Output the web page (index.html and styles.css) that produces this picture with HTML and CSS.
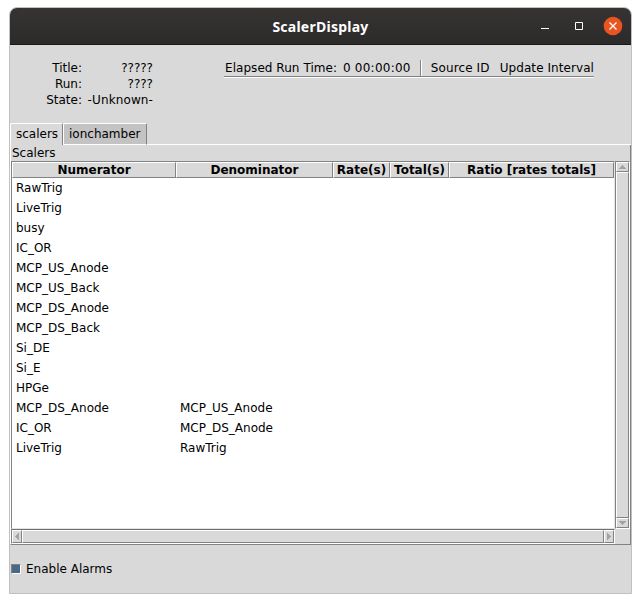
FILE: index.html
```html
<!DOCTYPE html>
<html lang="en">
<head>
<meta charset="utf-8">
<title>ScalerDisplay</title>
<link rel="stylesheet" href="styles.css">
</head>
<body>
<main class="window">
  <header class="titlebar">
    <span></span>
    <h1>ScalerDisplay</h1>
    <svg class="controls" width="96" height="36" viewBox="0 0 96 36">
      <path d="M6 20.5h8" stroke="#fff" fill="none"/>
      <path d="M40.5 14.5h7v7h-7z" stroke="#fff" fill="none"/>
      <circle cx="78" cy="18" r="9.3" fill="#e95420"/>
      <path d="M74.5 14.5l7 7M81.5 14.5l-7 7" stroke="#fff" stroke-width="1.3" fill="none"/>
    </svg>
  </header>
  <section class="status">
    <div class="run-info">
      <span>Title:</span><span>?????</span>
      <span>Run:</span><span>????</span>
      <span>State:</span><span class="state">-Unknown-</span>
    </div>
    <div class="timing">
      <span class="elapsed-label">Elapsed Run Time:</span>
      <span class="elapsed">0 00:00:00</span>
      <span class="source">Source ID</span>
      <span class="interval">Update Interval</span>
    </div>
  </section>
  <nav class="tabs">
    <div class="tab active">scalers</div>
    <div class="tab">ionchamber</div>
    <div class="tab-line"></div>
  </nav>
  <section class="pane">
    <div class="caption">Scalers</div>
    <div class="tree">
      <div class="list">
        <div class="row head"><span>Numerator</span><span>Denominator</span><span>Rate(s)</span><span>Total(s)</span><span>Ratio [rates totals]</span></div>
        <div class="row"><span>RawTrig</span></div>
        <div class="row"><span>LiveTrig</span></div>
        <div class="row"><span>busy</span></div>
        <div class="row"><span>IC_OR</span></div>
        <div class="row"><span>MCP_US_Anode</span></div>
        <div class="row"><span>MCP_US_Back</span></div>
        <div class="row"><span>MCP_DS_Anode</span></div>
        <div class="row"><span>MCP_DS_Back</span></div>
        <div class="row"><span>Si_DE</span></div>
        <div class="row"><span>Si_E</span></div>
        <div class="row"><span>HPGe</span></div>
        <div class="row"><span>MCP_DS_Anode</span><span>MCP_US_Anode</span></div>
        <div class="row"><span>IC_OR</span><span>MCP_DS_Anode</span></div>
        <div class="row"><span>LiveTrig</span><span>RawTrig</span></div>
      </div>
      <div class="vscroll">
        <div class="raised"><svg width="11" height="8" viewBox="0 0 11 8" shape-rendering="crispEdges"><path d="M5 2h1v1h1v1h1v1h1v1H2V5h1V4h1V3h1z" fill="#a3a3a3"/></svg></div>
        <div class="raised"></div>
        <div class="raised"><svg width="11" height="8" viewBox="0 0 11 8" shape-rendering="crispEdges"><path d="M2 2h7v1H8v1H7v1H6v1H5V5H4V4H3V3H2z" fill="#a3a3a3"/></svg></div>
      </div>
      <div class="hscroll">
        <div class="raised"><svg width="8" height="11" viewBox="0 0 8 11" shape-rendering="crispEdges"><path d="M2 5h1V4h1V3h1V2h1v7H5V8H4V7H3V6H2z" fill="#a3a3a3"/></svg></div>
        <div class="raised"></div>
        <div class="raised"><svg width="8" height="11" viewBox="0 0 8 11" shape-rendering="crispEdges"><path d="M2 2h1v1h1v1h1v1h1v1H5v1H4v1H3v1H2z" fill="#a3a3a3"/></svg></div>
      </div>
      <div class="corner"></div>
    </div>
  </section>
  <footer class="alarms"><i class="check"></i><span>Enable Alarms</span></footer>
</main>
</body>
</html>
```
FILE: styles.css
```css
* { box-sizing: border-box; }
body {
  margin: 0;
  padding: 7px 9px;
  background: #fff;
  color: #000;
  font: 12px/16px "DejaVu Sans", sans-serif;
  white-space: nowrap;
}
.window {
  width: 623px;
  height: 587px;
  display: flex;
  flex-direction: column;
  background: #d9d9d9;
  border: 1px solid #c0c0c0;
  border-radius: 8px 8px 0 0;
  overflow: hidden;
}
.titlebar {
  flex: none;
  height: 37px;
  display: grid;
  grid-template-columns: 96px 1fr 96px;
  background: linear-gradient(#353433, #2d2a2a);
  border-bottom: 1px solid #1b1a1a;
}
.titlebar h1 {
  margin: 0;
  font: bold 14px/38px "Noto Sans", sans-serif;
  letter-spacing: 0.25px;
  color: #fff;
  text-align: center;
}
.controls { display: block; }
.status {
  flex: none;
  height: 78px;
  display: flex;
  padding: 15px 0 0 34px;
}
.run-info {
  width: 109px;
  display: grid;
  grid-template-columns: 38px 71px;
  grid-auto-rows: 16px;
  text-align: right;
}
.state { letter-spacing: 0.12px; }
.timing {
  display: flex;
  width: 370px;
  height: 18px;
  margin-left: 71px;
  border-bottom: 1px solid #fff;
  box-shadow: inset 0 -1px #828282;
}
.timing .elapsed-label { width: 119px; padding-left: 1px; letter-spacing: 0.05px; }
.elapsed {
  width: 79px;
  height: 16px;
  letter-spacing: 0.25px;
  border-right: 1px solid #fff;
  box-shadow: inset -1px 0 #828282;
}
.source { width: 78px; padding-left: 9px; letter-spacing: 0.1px; }
.interval { letter-spacing: 0.07px; }
.tabs { flex: none; display: flex; height: 22px; align-items: flex-end; }
.tab {
  width: 84px;
  height: 22px;
  padding: 2px 0 0 5px;
  background: #c3c3c3;
  border: 1px solid #fff;
  border-right-color: #828282;
  border-radius: 2px 2px 0 0;
}
.tab.active {
  width: 53px;
  background: #d9d9d9;
  border-bottom: 0;
}
.tab-line { flex: 1; border-bottom: 1px solid #fff; }
.pane {
  flex: none;
  height: 400px;
  border-left: 1px solid #fff;
  border-right: 1px solid #828282;
  border-bottom: 1px solid #828282;
}
.caption { height: 16px; padding-left: 1px; }
.tree {
  height: 383px;
  display: grid;
  grid-template-columns: 604px 15px;
  grid-template-rows: 368px 15px;
}
.list {
  background: #fff;
  border-top: 1px solid #828282;
  border-left: 1px solid #828282;
  border-right: 1px solid #e4e4e4;
  border-bottom: 1px solid #e4e4e4;
}
.row {
  display: grid;
  grid-template-columns: 164px 157px 57px 59px 165px;
  height: 20px;
  line-height: 20px;
}
.row span { padding-left: 4px; }
.row.head { height: 16px; font-weight: bold; line-height: 14px; text-align: center; }
.row.head span { padding: 0; height: 16px; }
.row.head span, .raised {
  background: #d9d9d9;
  border: 1px solid #fff;
  border-right-color: #828282;
  border-bottom-color: #828282;
}
.raised svg { display: block; }
.vscroll {
  display: grid;
  grid-template-rows: 10px 1fr 10px;
  border: solid #828282;
  border-width: 1px 0 0 1px;
  border-right: 1px solid #fff;
  border-bottom: 1px solid #fff;
}
.hscroll {
  display: grid;
  grid-template-columns: 10px 1fr 10px;
  border-top: 1px solid #6f6f6f;
  border-left: 1px solid #828282;
  border-right: 1px solid #fff;
  border-bottom: 1px solid #fff;
}
.alarms {
  display: flex;
  align-items: center;
  gap: 5px;
  height: 48px;
  padding-left: 1px;
}
.check {
  width: 10px;
  height: 10px;
  background: #4a6984;
  border: 1px solid #828282;
  border-right-color: #fff;
  border-bottom-color: #fff;
}
```
